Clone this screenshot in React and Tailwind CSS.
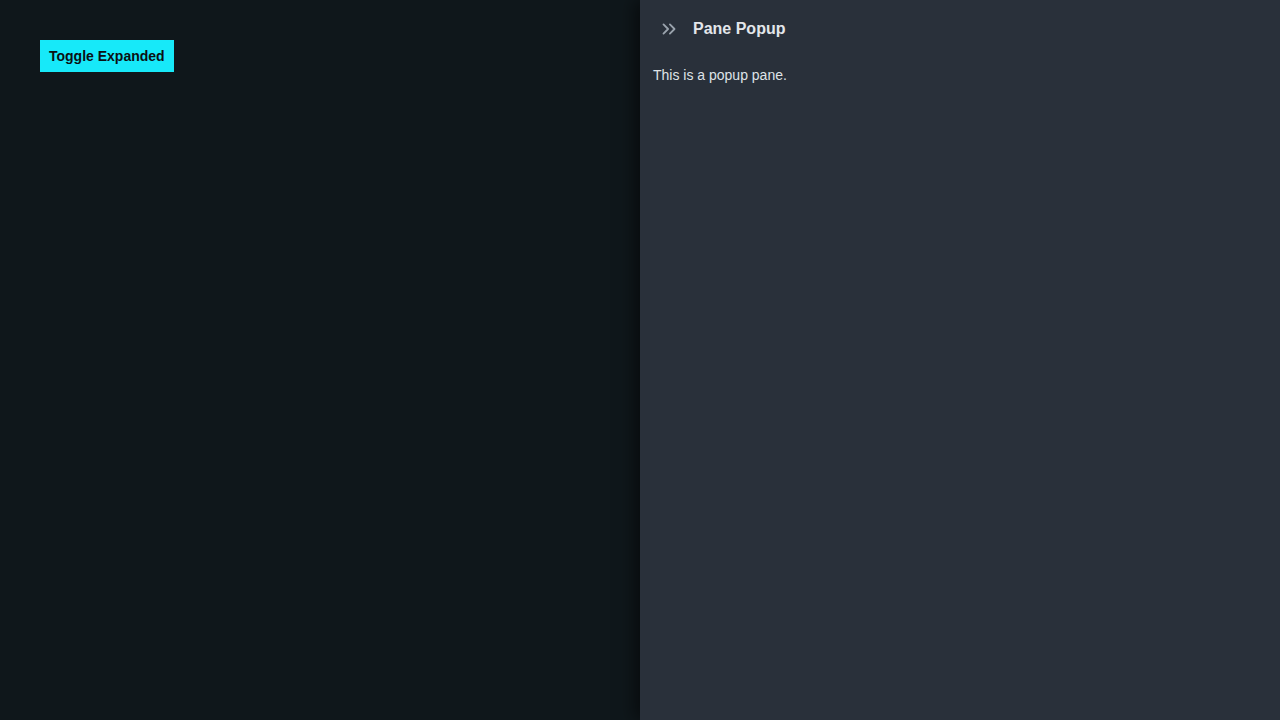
import React from "react";

export default function App() {
  return (
    <div className="w-[1280px] h-[720px] flex bg-[#0f171b] overflow-hidden" style={{ fontFamily: '"Liberation Sans", Arial, sans-serif' }}>
      <div className="w-[640px] h-full p-10">
        <button className="h-8 px-[9px] bg-[#17e9f9] text-[#0b1013] text-sm font-bold">Toggle Expanded</button>
      </div>
      <div className="w-[640px] h-full bg-[#29303a] shadow-[-6px_0_16px_rgba(0,0,0,0.5)] flex flex-col">
        <div className="h-[57px] flex items-center">
          <div className="ml-[17px] w-6 h-6 flex items-center justify-center">
            <svg width="22" height="22" viewBox="0 0 24 24" fill="none" stroke="#9aa3ad" strokeWidth="2" strokeLinecap="round" strokeLinejoin="round">
              <path d="m6 17 5-5-5-5" />
              <path d="m13 17 5-5-5-5" />
            </svg>
          </div>
          <div className="ml-[12px] text-base font-bold text-[#e3e6ea]">Pane Popup</div>
        </div>
        <div className="px-[13px] pt-[8px] text-sm text-[#dfe3e7]">This is a popup pane.</div>
      </div>
    </div>
  );
}
